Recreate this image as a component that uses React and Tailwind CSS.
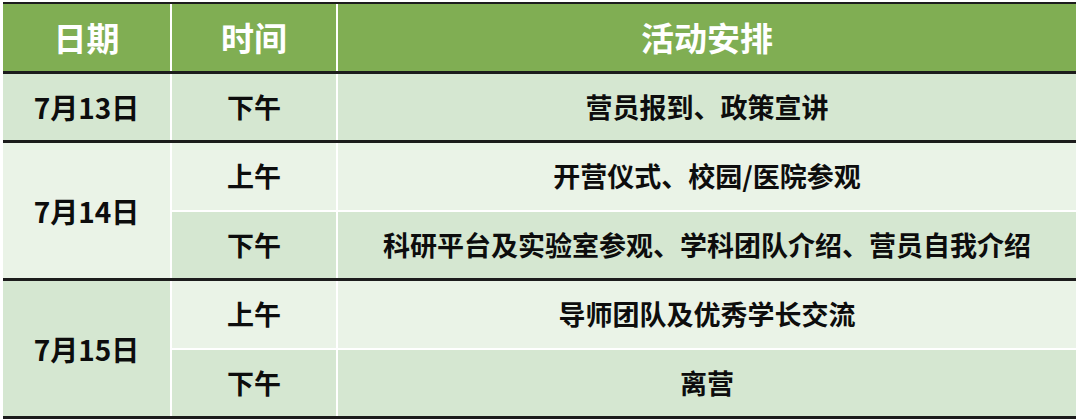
const dark = 'bg-[#d5e7d1]';
const light = 'bg-[#eaf3e7]';

const groups = [
  { date: '7月14日', dateBg: light, rows: [['上午', '开营仪式、校园/医院参观', light], ['下午', '科研平台及实验室参观、学科团队介绍、营员自我介绍', dark]] },
  { date: '7月15日', dateBg: dark, rows: [['上午', '导师团队及优秀学长交流', light], ['下午', '离营', dark]] },
];

const cell = 'flex items-center justify-center';

export default function App() {
  return (
    <div className="w-[1080px] h-[419px] bg-white pt-[2px] pl-[3px]" style={{ fontFamily: '"Noto Sans CJK SC", "Noto Sans", sans-serif' }}>
      <div className="w-[1073px] border-t-[2px] border-b-[3px] border-[#1c1c1c] font-bold">
        <div className="grid grid-cols-[167px_164px_1fr] gap-x-[2px] bg-white h-[67px] text-white text-[33px]">
          <div className={`${cell} bg-[#80ae53]`}>日期</div>
          <div className={`${cell} bg-[#80ae53]`}>时间</div>
          <div className={`${cell} bg-[#80ae53]`}>活动安排</div>
        </div>
        <div className="grid grid-cols-[167px_164px_1fr] gap-x-[2px] bg-white h-[69px] border-t-[3px] border-[#1c1c1c] text-[27px] text-[#0d0d0d]">
          <div className={`${cell} ${dark} text-[28px]`}>7月13日</div>
          <div className={`${cell} ${dark}`}>下午</div>
          <div className={`${cell} ${dark}`}>营员报到、政策宣讲</div>
        </div>
        {groups.map((g) => (
          <div key={g.date} className="grid grid-cols-[167px_164px_1fr] grid-rows-[67px_66px] gap-[2px] bg-white border-t-[3px] border-[#1c1c1c] text-[27px] text-[#0d0d0d]">
            <div className={`${cell} ${g.dateBg} row-span-2 text-[28px]`}>{g.date}</div>
            {g.rows.map(([t, a, bg]) => [
              <div key={t} className={`${cell} ${bg}`}>{t}</div>,
              <div key={t + 'a'} className={`${cell} ${bg}`}>{a}</div>,
            ])}
          </div>
        ))}
      </div>
    </div>
  );
}
